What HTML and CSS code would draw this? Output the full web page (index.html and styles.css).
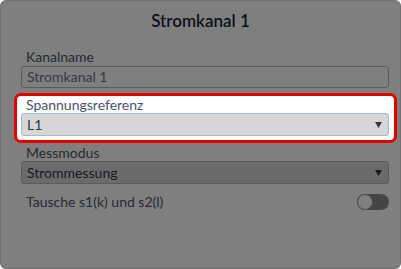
FILE: index.html
```html
<!DOCTYPE html>
<html lang="de">
<head>
<meta charset="utf-8">
<title>Stromkanal 1</title>
<link rel="stylesheet" href="styles.css">
</head>
<body>
<div class="modal">
  <h2 class="title">Stromkanal 1</h2>
  <div class="form">
    <div class="field">
      <div class="label">Kanalname</div>
      <div class="input">Stromkanal 1</div>
    </div>
    <div class="field spot">
      <div class="label">Spannungsreferenz</div>
      <div class="select"><span>L1</span><svg class="arrow" width="7" height="6" viewBox="0 0 7 6"><path d="M0 0H7L3.5 6Z" fill="#2d3748"/></svg></div>
    </div>
    <div class="field">
      <div class="label">Messmodus</div>
      <div class="select"><span>Strommessung</span><svg class="arrow" width="7" height="6" viewBox="0 0 7 6"><path d="M0 0H7L3.5 6Z" fill="#2d3748"/></svg></div>
    </div>
    <div class="toggle-row">
      <span class="toggle-label">Tausche s1(k) und s2(l)</span>
      <span class="toggle"><span class="knob"></span></span>
    </div>
  </div>
  <div class="overlay"></div>
</div>
</body>
</html>
```
FILE: styles.css
```css
* { box-sizing: border-box; }
html, body { margin: 0; height: 100%; }
body {
  background: #ffffff;
  font-family: "Lato", "Noto Sans", sans-serif;
  color: #2d3748;
}
.modal {
  position: relative;
  height: 100vh;
  border: 1px solid #e2e2e2;
  border-radius: 6px;
  padding-top: 10px;
  background: #ffffff;
}
.title {
  margin: 0;
  text-align: center;
  font-size: 17px;
  line-height: 20px;
  font-weight: 600;
  color: #1a2535;
}
.form {
  display: flex;
  flex-direction: column;
  gap: 8px;
  padding: 17px 11px 0 20px;
}
.field {
  display: flex;
  flex-direction: column;
}
.label {
  font-size: 14px;
  line-height: 17px;
  padding-left: 5px;
  color: #4a5568;
}
.input {
  height: 22px;
  margin-top: 1px;
  border: 1px solid #a9b8c9;
  border-radius: 3px;
  padding: 0 5px;
  font-size: 14px;
  line-height: 20px;
  color: #6b7585;
  background: #ffffff;
}
.select {
  height: 23px;
  display: flex;
  align-items: center;
  justify-content: space-between;
  border: 1px solid #a9b8c9;
  border-radius: 3px;
  padding: 0 6px 0 5px;
  font-size: 14px;
  color: #2d3748;
  background: #d6d6d6;
}
.spot {
  position: relative;
  z-index: 2;
  margin: -3px -8px -7px -7px;
  padding: 0 5px 4px 4px;
  border: 3px solid #e00000;
  border-radius: 7px;
  background: #ffffff;
}
.toggle-row {
  display: flex;
  align-items: center;
  justify-content: space-between;
  margin-top: 1px;
  padding-left: 5px;
}
.toggle-label {
  font-size: 14px;
  color: #4a5568;
}
.toggle {
  width: 32px;
  height: 16px;
  border-radius: 8px;
  background: #8a8a8a;
  display: flex;
  align-items: center;
}
.knob {
  width: 16px;
  height: 16px;
  border-radius: 50%;
  background: #ffffff;
  border: 1px solid #9a9a9a;
}
.overlay {
  position: absolute;
  inset: -1px;
  z-index: 1;
  background: rgba(0, 0, 0, 0.5);
  border-radius: 6px;
}
```
